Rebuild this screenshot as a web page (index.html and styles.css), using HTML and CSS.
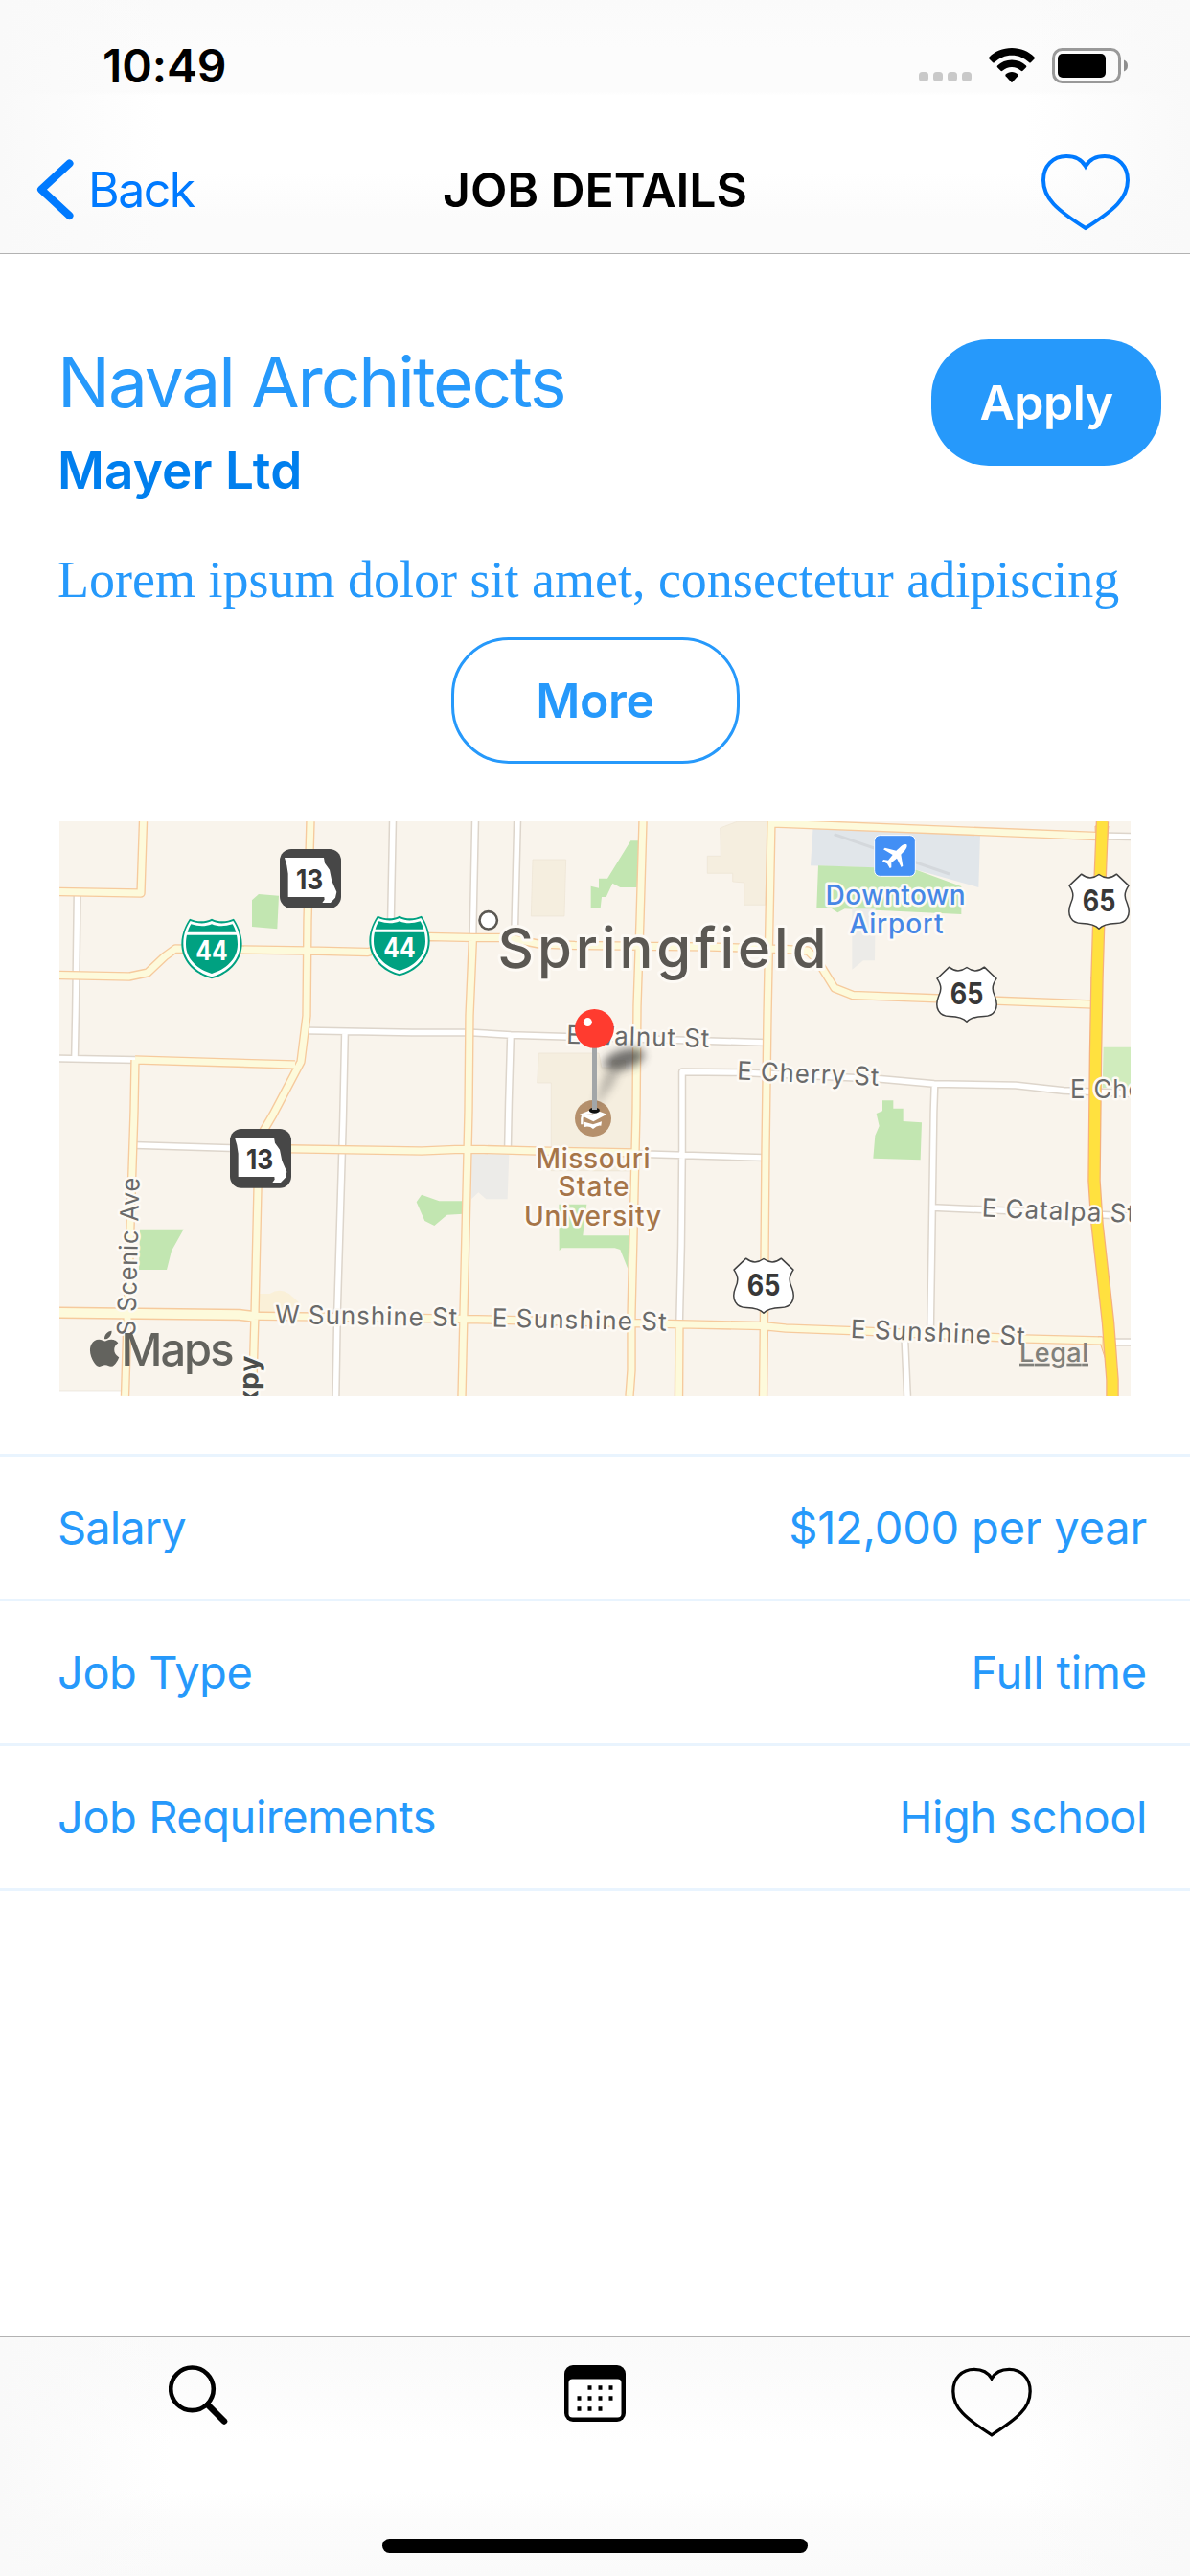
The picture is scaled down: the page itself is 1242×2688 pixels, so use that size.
FILE: index.html
```html
<!DOCTYPE html>
<html lang="en">
<head>
<meta charset="utf-8">
<title>Job Details</title>
<link rel="stylesheet" href="styles.css">
</head>
<body>
<div class="screen">
  <header class="top-bar">
    <div class="status">
      <span class="time">10:49</span>
      <div class="status-icons">
        <span class="dots"><i></i><i></i><i></i><i></i></span>
        <svg class="wifi" width="48" height="37" viewBox="0 0 48 37">
          <path d="M24 0C14.500 0 6.500 3.500 0.500 9.500Q-0.500 10.500 0.500 11.500L4 15Q5 16 6 15C11 10.300 17 7.700 24 7.700S37 10.300 42 15Q43 16 44 15L47.500 11.500Q48.500 10.500 47.500 9.500C41.500 3.500 33.500 0 24 0Z"/>
          <path d="M24 12.500C18 12.500 13 14.600 9 18.500Q8.200 19.500 9 20.300L12.500 23.800Q13.400 24.500 14.300 23.800C17 21.300 20.200 20 24 20S31 21.300 33.700 23.800Q34.600 24.500 35.500 23.800L39 20.300Q39.800 19.500 39 18.500C35 14.600 30 12.500 24 12.500Z"/>
          <path d="M24 25C21.500 25 19.300 25.900 17.600 27.500Q16.900 28.300 17.600 29.200L23.200 35.500Q24 36.300 24.800 35.500L30.400 29.200Q31.100 28.300 30.400 27.500C28.700 25.900 26.500 25 24 25Z"/>
        </svg>
        <svg class="battery" width="80" height="37" viewBox="0 0 80 37">
          <rect x="1.500" y="1.500" width="69" height="34" rx="9" fill="none" stroke="#999" stroke-width="3"/>
          <rect x="6" y="6" width="50" height="25" rx="5"/>
          <path d="M75 12.500Q79 14 79 18.500T75 24.500Z" fill="#8e8e8e"/>
        </svg>
      </div>
    </div>
    <nav class="nav">
      <a class="back">
        <svg width="39" height="64" viewBox="0 0 39 64"><path d="M34.500 4.500L5 31.700L34.500 59" fill="none" stroke="#007aff" stroke-width="8" stroke-linecap="round" stroke-linejoin="round"/></svg>
        <span>Back</span>
      </a>
      <h1>JOB DETAILS</h1>
      <svg class="fav" width="92" height="80" viewBox="0 0 92 80"><path d="M46 12.500C42 5.500 35 2 26 2C12 2 2 12 2 27C2 46 16 58 46 77C76 58 90 46 90 27C90 12 80 2 66 2C57 2 50 5.500 46 12.500Z" fill="none" stroke="#007aff" stroke-width="4"/></svg>
    </nav>
  </header>

  <main>
    <section class="job">
      <div class="job-names">
        <h2>Naval Architects</h2>
        <h3>Mayer Ltd</h3>
      </div>
      <button class="apply">Apply</button>
    </section>
    <p class="summary">Lorem ipsum dolor sit amet, consectetur adipiscing</p>
    <button class="more">More</button>

    <svg class="map" width="1118" height="600" viewBox="62 857 1118 600">
      <defs>
        <filter id="soft" x="-50%" y="-100%" width="200%" height="300%"><feGaussianBlur stdDeviation="5"/></filter>
        <path id="minor" d="M62 1104.500L141 1106M80.700 930L79 1055L78 1105M410 857L407.500 985M322 1075.500L430 1077.500L492 1077.500L533 1080L800 1088M360 1077L358 1170L352 1370L350.500 1457M141 1195L240 1198M496 857L493.500 978M540 857L537 978M533 1080L531 1150L530 1199M665 1204L797 1208M712 1205V1118.500L770 1119L920 1126L975 1131L1060 1132.500L1110 1138L1180 1141M712 1200L711 1300L709 1385M975.500 1131L974.500 1160L973 1260L971 1392M944 1389L947 1457M973 1260L1180 1269M1156 872.500L1180 873M1150 1400.500H1180M62 1455H128"/>
        <path id="major" d="M62 930.500L147 932L149.500 857M62 1017.500L135 1019L154 1015L172 998L183 990L322 992L384 993.500L449 977.500L495 978.500L530 978.500L562 985L600 986.500L740 988L820 990.500L843 992L853 1002L871 1031L890 1038.500L1140 1048M324 857L321 960L320 1060L314 1108L285 1163L275 1180L269 1240L266 1372L263.500 1457M141 1106L308 1111M141 1106L140 1160L136 1280L130.500 1457M250 1198L440 1201L475 1199.500L505 1199.500L560 1201L665 1203M250 1373L440 1375.500L510 1377L720 1382L795 1383.500L820 1386L900 1389L1070 1397L1150 1399M493.500 978.500L490 1060L489 1160L484 1370L482 1457M671 857L668 960L665 1050L664 1160L661 1290L659 1372L659 1430L657 1457M805 857L803 960L801 1060L799 1200L797.500 1370L796.500 1457M709 1385L708.500 1457M805 859L820 859.500L1145 872.500"/>
        <path id="wide" d="M62 1369.700L250 1372L266 1374"/>
        <path id="highway" d="M1150.500 857L1148 920L1145 1020L1143.500 1100L1142 1232L1145 1277L1156.500 1380L1161 1440V1457"/>
        <g id="interstate">
          <path d="M-69-88C-48-79-23-76 0-88C23-76 48-79 69-88C80-72 95-42 95-10C95 50 47 88 0 100C-47 88-95 50-95-10C-95-42-80-72-69-88Z" fill="#00a181"/>
          <path d="M-67-81C-45-73-22-70 0-81C22-70 45-73 67-81C78-65 89-42 89-10C89 46 44 82 0 94C-44 82-89 46-89-10C-89-42-78-65-67-81Z" fill="#fff"/>
          <path d="M-65-71C-42-64-22-62 0-71C22-62 42-64 65-71C73-58 81-36 81-8C81 40 42 72 0 84C-42 72-81 40-81-8C-81-36-73-58-65-71Z" fill="#00a181"/>
          <path d="M-80-41H80" stroke="#fff" stroke-width="9"/>
          <text class="shield-num white" x="-50" y="41" textLength="100" lengthAdjust="spacingAndGlyphs">44</text>
        </g>
        <g id="us">
          <path d="M-55-85Q-28-63 0-84Q28-63 55-85L93-49C77-26 80-11 88 6C103 43 86 69 54 69C29 70 11 74 0 86C-11 74-29 70-54 69C-86 69-103 43-88 6C-80-11-77-26-93-49Z" fill="#fff" stroke="#414141" stroke-width="4.500" stroke-linejoin="round"/>
          <text class="shield-num us-num" x="-52" y="31" textLength="104" lengthAdjust="spacingAndGlyphs">65</text>
        </g>
        <g id="state">
          <rect x="-96" y="-92" width="192" height="185" rx="36" fill="#474747"/>
          <path d="M-81-65H42L45-48L60-27L67 8L82 42L78 60L63 76H37L44 66L43 58H-70V-15Q-72-40-81-65Z" fill="#fff"/>
          <text class="shield-num" x="-45" y="33" textLength="85" lengthAdjust="spacingAndGlyphs">13</text>
        </g>
      </defs>
      <rect x="62" y="857" width="1118" height="600" fill="#f9f4ec"/>

      <g transform="translate(40 840) scale(.33333)">
        <path class="park" d="M669 298L690 279L753 284L748 388L669 381Z"/>
      </g>
      <g transform="translate(430 840) scale(.33333)">
        <path class="park" d="M685 112H710L704 258H652L628 245L608 288H594L590 323H560V254L585 260V230H612Z"/>
        <path class="site" d="M378 171H482L477 348H373ZM965 72L1020 51H1116L1106 313H1040V243L1004 240V214H925V160H967Z"/>
        <path class="site" d="M397 777H585L594 822H627V800H668V826H705L690 1145H436V870H392Z"/>
      </g>
      <g transform="translate(820 840) scale(.33333)">
        <path d="M86 67L609 92L604 258L400 200L78 190Z" fill="#e1e6ea"/>
        <path class="park" d="M102 190L280 196L405 202L550 255V342L185 325L163 337L140 322H97Z"/>
        <path d="M152 92L513 216" stroke="#d4d8dc" stroke-width="9"/>
        <path class="lot" d="M208 325H281L279 487H243L208 515Z"/>
        <path d="M995 758H1080V885H992Z" fill="#d0ecbd"/>
        <path class="park" d="M303 925H337V950H368V990L426 994L422 1111L274 1106L280 1035L293 1005L284 966L303 958Z"/>
      </g>
      <g transform="translate(40 1150) scale(.33333)">
        <path class="park" d="M318 398H455L417 466L402 525H315Z"/>
        <path d="M690 600H725Q755 580 785 600L825 635L740 660H690Z" fill="#faf0d8"/>
      </g>
      <g transform="translate(430 1150) scale(.33333)">
        <path class="lot" d="M187 163H304L299 304H232L208 283L186 304Z"/>
        <path class="park" d="M30 290L85 310H160V350L110 353L70 387L40 372L14 313ZM460 320H547L535 418H680L676 522L652 462L635 457H470L461 465Z"/>
        <path class="site" d="M565 150H690V215H565Z"/>
      </g>

      <g class="roads">
        <use href="#minor" class="minor-edge"/>
        <use href="#minor" class="minor-fill"/>
        <use href="#major" class="major-edge"/>
        <use href="#wide" class="major-edge wide-edge"/>
        <path class="ramp" d="M1143 862L1157 862L1152 915L1145 915ZM1139 1020L1150 1048L1141 1080ZM1146 1395L1158 1395L1156 1425Z"/>
        <use href="#major" class="major-fill"/>
        <use href="#wide" class="major-fill wide-fill"/>
        <use href="#highway" class="highway-edge"/>
        <use href="#highway" class="highway-fill"/>
      </g>

      <g class="street">
        <text transform="translate(591 1089) rotate(1.500)" textLength="150" lengthAdjust="spacingAndGlyphs">E Walnut St</text>
        <text transform="translate(769 1126.500) rotate(2.500)" textLength="149" lengthAdjust="spacingAndGlyphs">E Cherry St</text>
        <text transform="translate(1117 1145.500)" textLength="149" lengthAdjust="spacingAndGlyphs">E Cherry St</text>
        <text transform="translate(1024.500 1269.500) rotate(2.300)" textLength="161" lengthAdjust="spacingAndGlyphs">E Catalpa St</text>
        <text transform="translate(287 1381) rotate(.900)" textLength="191" lengthAdjust="spacingAndGlyphs">W Sunshine St</text>
        <text transform="translate(513.500 1384.500) rotate(1.300)" textLength="183" lengthAdjust="spacingAndGlyphs">E Sunshine St</text>
        <text transform="translate(887.500 1396) rotate(2.400)" textLength="183" lengthAdjust="spacingAndGlyphs">E Sunshine St</text>
        <text transform="translate(141 1394) rotate(-88.400)" textLength="166" lengthAdjust="spacingAndGlyphs">S Scenic Ave</text>
        <text class="expy" transform="translate(270 1414) rotate(-89)" text-anchor="end">Expy</text>
      </g>

      <g transform="translate(221 988) scale(.33333)"><use href="#interstate"/></g>
      <g transform="translate(417 985) scale(.33333)"><use href="#interstate"/></g>
      <g transform="translate(324 916.700) scale(.33333)"><use href="#state"/></g>
      <g transform="translate(272 1208.700) scale(.33333)"><use href="#state"/></g>
      <g transform="translate(1147 940.500) scale(.33333)"><use href="#us"/></g>
      <g transform="translate(1009 1037.500) scale(.33333)"><use href="#us"/></g>
      <g transform="translate(797 1341.500) scale(.33333)"><use href="#us"/></g>

      <circle cx="509.700" cy="960.300" r="9.200" fill="#fff" stroke="#5b5853" stroke-width="2.600"/>
      <text class="city" x="519.500" y="1009.500" textLength="343">Springfield</text>

      <g transform="translate(820 840) scale(.33333)">
        <rect x="278" y="95" width="128" height="128" rx="17" fill="#428ff5" stroke="#fff" stroke-width="3"/>
        <path d="M379 124C372 120 364 126 356 134L346 143L311 134L306 139L335 156L321 173L306 171L303 176L318 184L326 198L331 196L331 181L348 167L362 195L367 191L361 155C372 145 383 133 379 124Z" fill="#fff"/>
      </g>
      <g class="poi airport">
        <text x="861.500" y="944" textLength="146">Downtown</text>
        <text x="886.500" y="974" textLength="98">Airport</text>
      </g>

      <circle cx="619" cy="1167" r="19" fill="#b5906c"/>
      <g transform="translate(430 1150) scale(.33333)">
        <path d="M524 39L567 22L610 38L568 61ZM540 62L567 70L594 61L592 74Q580 71 567 84Q556 74 540 78Z" fill="#fff"/>
        <path d="M568 40L537 42Q532 44 532 52V70" fill="none" stroke="#fff" stroke-width="7"/>
        <path d="M568 39L536 41" stroke="#b5906c" stroke-width="3"/>
      </g>
      <g class="poi campus">
        <text x="559.500" y="1218.500" textLength="119">Missouri</text>
        <text x="582.500" y="1248.300" textLength="74">State</text>
        <text x="547" y="1278.500" textLength="143">University</text>
      </g>

      <path d="M620 1158L630 1122L650 1110L640 1132Z" fill="#333" opacity=".3" filter="url(#soft)"/>
      <ellipse cx="651" cy="1105.500" rx="22" ry="10" transform="rotate(-16 651 1105)" fill="#333" opacity=".68" filter="url(#soft)"/>
      <ellipse cx="620.400" cy="1158.700" rx="5.500" ry="3" fill="#111"/>
      <rect x="618" y="1090" width="5" height="68" fill="#a2a6a8"/>
      <circle cx="620.400" cy="1073.300" r="20.400" fill="#ff3b2f"/>
      <circle cx="613.400" cy="1066.600" r="4.500" fill="#fff"/>

      <g class="brand">
        <path transform="translate(90.500 1388.700) scale(1.550)" d="M12.152 6.896c-.948 0-2.415-1.078-3.960-1.040-2.040.027-3.910 1.183-4.961 3.014-2.117 3.675-.546 9.103 1.519 12.090 1.013 1.454 2.208 3.090 3.792 3.039 1.520-.065 2.090-.987 3.935-.987 1.831 0 2.350.987 3.960.948 1.637-.026 2.676-1.480 3.676-2.948 1.156-1.688 1.636-3.325 1.662-3.415-.039-.013-3.182-1.221-3.220-4.857-.026-3.040 2.480-4.494 2.597-4.559-1.429-2.090-3.623-2.324-4.390-2.376-2-.156-3.675 1.090-4.610 1.090zM15.530 3.830c.843-1.012 1.400-2.427 1.245-3.830-1.207.052-2.662.805-3.532 1.818-.780.896-1.454 2.338-1.273 3.714 1.338.104 2.715-.688 3.559-1.701"/>
        <text x="126.500" y="1425" textLength="118">Maps</text>
      </g>
      <text class="legal" x="1064" y="1420.700" textLength="72">Legal</text>
    </svg>

    <dl class="facts">
      <div><dt class="tight">Salary</dt><dd class="roomy">$12,000 per year</dd></div>
      <div><dt>Job Type</dt><dd class="roomy">Full time</dd></div>
      <div><dt>Job Requirements</dt><dd>High school</dd></div>
    </dl>
  </main>

  <footer class="tab-bar">
    <div class="tabs">
      <svg width="62" height="64" viewBox="0 0 62 64"><circle cx="24.500" cy="24.800" r="22.300" fill="none" stroke="#000" stroke-width="4.600"/><path d="M41 41.500L58 58.500" stroke="#000" stroke-width="6.500" stroke-linecap="round"/></svg>
      <svg width="64" height="60" viewBox="0 0 64 60">
        <rect width="64" height="59" rx="9"/>
        <rect x="4.500" y="14.500" width="55" height="40" rx="4" fill="#fff"/>
        <path d="M24.500 23.500h4M35.500 23.500h4M46.500 23.500h4M13.500 34.500h4M24.500 34.500h4M35.500 34.500h4M46.500 34.500h4M13.500 45.500h4M24.500 45.500h4M35.500 45.500h4" stroke="#000" stroke-width="4.500"/>
      </svg>
      <svg class="tab-heart" width="84" height="74" viewBox="0 0 92 80"><path d="M46 12.500C42 5.500 35 2 26 2C12 2 2 12 2 27C2 46 16 58 46 77C76 58 90 46 90 27C90 12 80 2 66 2C57 2 50 5.500 46 12.500Z" fill="none" stroke="#000" stroke-width="3.600"/></svg>
    </div>
    <div class="home"></div>
  </footer>
</div>
</body>
</html>
```
FILE: styles.css
```css
* { box-sizing: border-box; }
body { margin: 0; background: #fff; font-family: Inter, "Liberation Sans", sans-serif; }
h1, h2, h3, p, dl, dd { margin: 0; }
svg { display: block; }
button { font: 600 50px Inter, sans-serif; padding: 0; }

.screen { width: 1242px; height: 2688px; display: flex; flex-direction: column; overflow: hidden; }

.top-bar {
  height: 265px;
  border-bottom: 1px solid #b2b2b2;
  background:
    linear-gradient(90deg, #f9f9f9, #fbfbfb00 170px, #fbfbfb00 1070px, #f9f9f9),
    linear-gradient(#fafafa, #fcfcfc 50px, #fcfcfc 95px, #fff 100px, #fff 180px, #fbfbfb 228px);
}
.status { height: 132px; padding: 4px 65px 0 107px; display: flex; justify-content: space-between; align-items: center; }
.time { font-size: 48px; font-weight: 600; letter-spacing: -.1px; }
.status-icons { display: flex; align-items: center; }
.dots { display: flex; gap: 5px; margin: 24px 18px 0 0; }
.dots i { width: 10px; height: 10px; border-radius: 3.500px; background: #c9c9c9; }
.wifi { margin-right: 18px; }
.battery { margin-right: -1px; }

.nav { height: 132px; display: grid; grid-template-columns: 1fr auto 1fr; align-items: center; padding: 0 63px; }
.back { display: flex; align-items: center; gap: 15px; margin-left: -25px; color: #007aff; font-size: 50px; letter-spacing: -1.5px; }
.nav h1 { font-size: 50px; font-weight: 600; letter-spacing: -.1px; white-space: nowrap; }
.fav { justify-self: end; margin-top: 6px; }

main { flex: 1; display: flex; flex-direction: column; }
.job { display: flex; justify-content: space-between; padding: 89px 30px 0 60px; }
.job h2 { font-size: 73px; font-weight: 400; line-height: 89px; color: #2699fb; letter-spacing: -2.1px; white-space: nowrap; }
.job h3 { font-size: 53px; font-weight: 600; line-height: 96px; color: #007fee; letter-spacing: .1px; }
.apply { width: 240px; height: 132px; border: 0; border-radius: 60px; background: #2699fb; color: #fff; letter-spacing: -.5px; }
.summary { padding: 6px 0 0 60px; font: 54px/120px "Liberation Serif", serif; color: #2699fb; white-space: nowrap; }
.more { align-self: center; width: 301px; height: 132px; border: 3px solid #2699fb; border-radius: 60px; background: #fff; color: #2699fb; letter-spacing: -.3px; }

.map { margin: 60px 0 0 62px; }
.map text { font-family: Inter, "Liberation Sans", sans-serif; }
.park { fill: #c2e6b1; }
.site { fill: #f5eedf; stroke: #ede4d3; stroke-width: 2; }
.lot { fill: #ecebe8; }
.roads use { fill: none; stroke-linejoin: round; }
.minor-edge { stroke: #ddd5cb; stroke-width: 8.500px; }
.minor-fill { stroke: #fff; stroke-width: 5.500px; }
.major-edge { stroke: #f6ca9d; stroke-width: 9.500px; }
.major-fill { stroke: #fdfadb; stroke-width: 6.800px; }
.wide-edge { stroke-width: 12.500px; }
.wide-fill { stroke-width: 9.500px; }
.ramp { fill: #fbe0b0; stroke: #f6b98a; stroke-width: 1px; }
.highway-edge { stroke: #f5b07c; stroke-width: 13.500px; }
.highway-fill { stroke: #ffe13f; stroke-width: 11px; }
.street text { font-size: 26.500px; letter-spacing: 1px; fill: #6a6a6a; stroke: #fdfaf5; stroke-width: 5px; stroke-linejoin: round; paint-order: stroke; }
.street .expy { font-size: 28px; font-weight: 700; fill: #4a4d4c; }
.city { font-size: 58px; font-weight: 500; fill: #5b5853; stroke: #fdfaf5; stroke-width: 6px; stroke-linejoin: round; paint-order: stroke; }
.poi text { font-size: 28px; font-weight: 500; stroke: #fdfaf5; stroke-width: 5px; stroke-linejoin: round; paint-order: stroke; }
.airport { fill: #4687e6; }
.campus { fill: #a67549; }
.shield-num { font-size: 87px; font-weight: 700; fill: #383838; }
.us-num { font-size: 92px; }
.white { fill: #fff; }
.brand { fill: #5c5c57; opacity: .95; }
.brand text { font-size: 47px; font-weight: 500; }
.legal { font-size: 27px; font-weight: 500; fill: #80807b; text-decoration: underline; text-decoration-thickness: 3px; }

.facts { margin-top: 60px; border-bottom: 3px solid #e9f4fe; }
.facts div { height: 151px; border-top: 3px solid #e9f4fe; padding: 0 45px 2px 60px; display: flex; justify-content: space-between; align-items: center; font-size: 47px; color: #2699fb; letter-spacing: -.45px; }
.facts .tight { letter-spacing: -.9px; }
.facts .roomy { letter-spacing: -.2px; }

.tab-bar {
  height: 250px;
  border-top: 1px solid #b2b2b2;
  background:
    linear-gradient(90deg, #f9f9f9, #fbfbfb00 180px, #fbfbfb00 1070px, #f9f9f9),
    linear-gradient(#fafafa, #fcfcfc 60px, #fff 110px, #fff 160px, #fcfcfc 190px, #fafafa);
}
.tabs { display: grid; grid-template-columns: repeat(3, 1fr); justify-items: center; align-items: start; height: 182px; padding-top: 29px; }
.tab-heart { margin-top: 2px; }
.home { width: 444px; height: 15px; margin: 28px auto 0; border-radius: 8px; background: #000; }
```
